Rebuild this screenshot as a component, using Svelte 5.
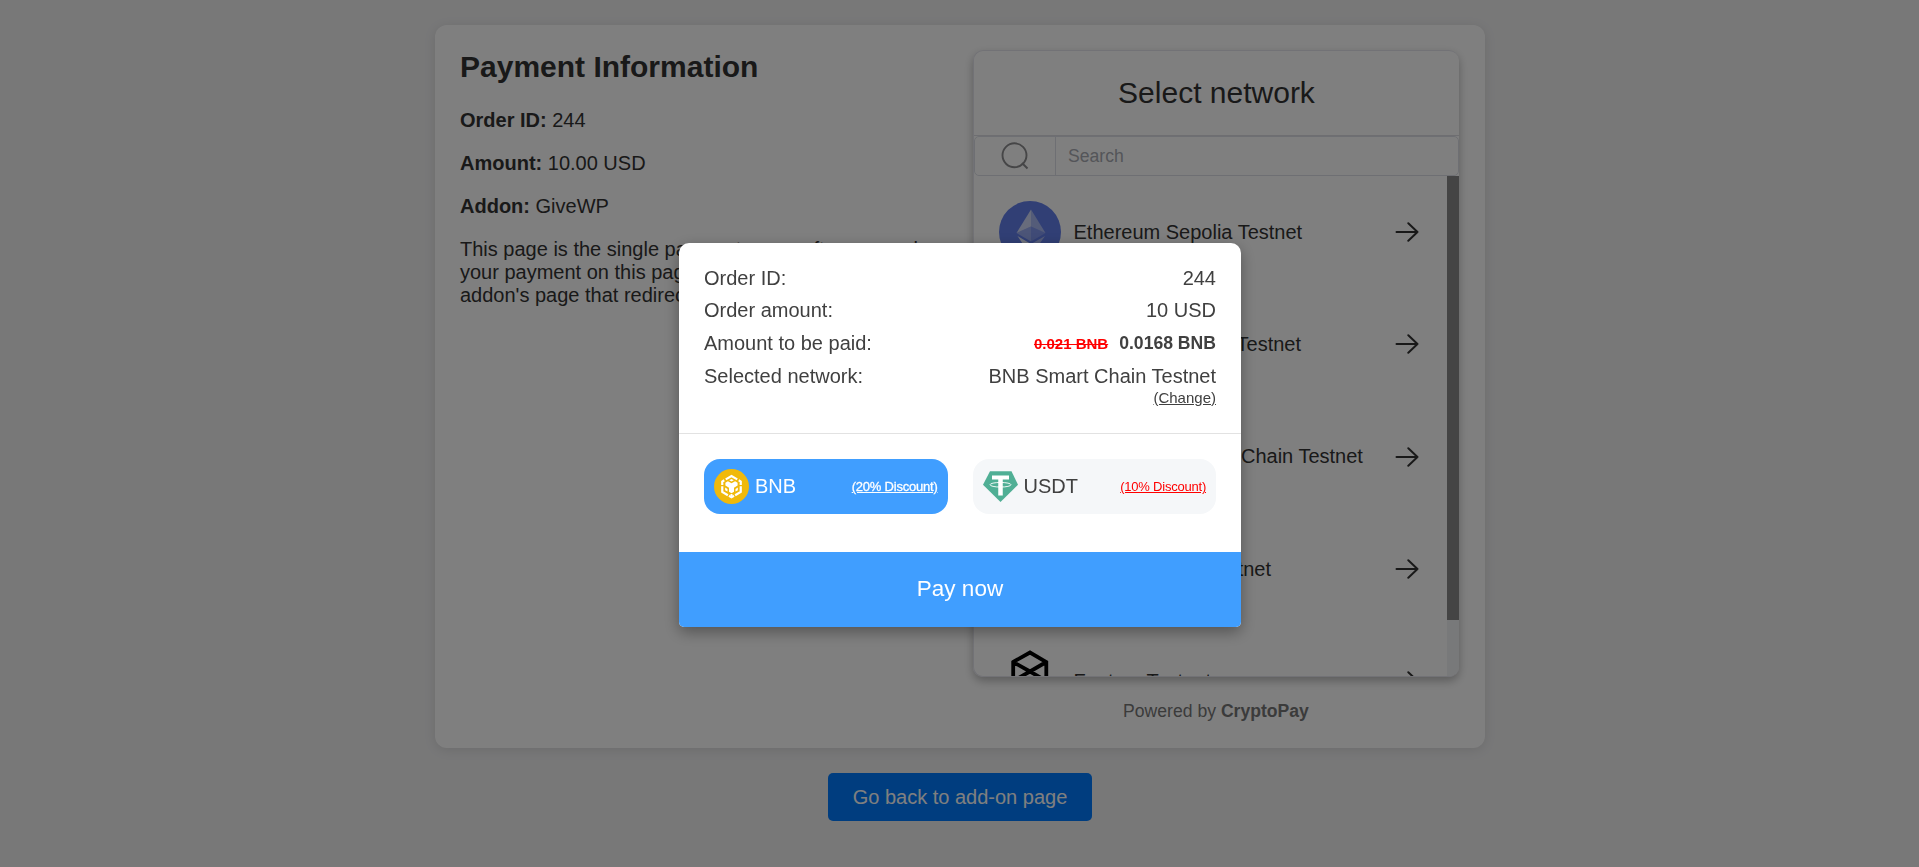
<script>
  const networks = [
    { name: 'Ethereum Sepolia Testnet', icon: 'eth' },
    { name: 'BNB Smart Chain Testnet', icon: 'bnb' },
    { name: 'Avalanche FUJI C-Chain Testnet', icon: 'avax' },
    { name: 'Polygon Amoy Testnet', icon: 'polygon' },
    { name: 'Fantom Testnet', icon: 'ftm' }
  ];
</script>

{#snippet bnbIcon()}
  <svg viewBox="0 0 70 70">
    <circle cx="35" cy="35" r="35" fill="#f0b90b" />
    <g fill="none" stroke="#fff" stroke-width="4.4">
      <path d="M23.500 20.800 35 14.200l11.500 6.600" />
      <path d="M20.500 22.500 16.500 25v7M49.500 22.500l4 2.500v7" />
      <path d="M16.500 34.500v11.300l11.200 6.700M53.500 34.500v11.300l-11.200 6.700" />
      <path d="M30 53.600l5 3 5-3" />
    </g>
    <path d="M35 19.800l4.500 2.600L35 25l-4.500-2.600z" fill="#fff" />
    <path d="M22.800 27.300l5-2.900L35 28.600l7.200-4.200 5 2.900v5.800l-7.200 4.200v8.300L35 48.500l-5-2.900v-8.300l-7.200-4.200z" fill="#fff" />
    <path d="M22.300 37l4.700 2.800v5.400l-4.700-2.800zM47.700 37 43 39.800v5.400l4.700-2.800z" fill="#fff" />
    <path d="M33 50h4v5h-4z" fill="#fff" />
  </svg>
{/snippet}

{#snippet arrow()}
  <svg class="arrow" viewBox="0 0 24 20" fill="none" stroke="#333" stroke-width="2" stroke-linecap="round" stroke-linejoin="round">
    <path d="M1.500 10h21M13.300 1.200l9.200 8.800-9.200 8.800" />
  </svg>
{/snippet}

<div class="page">
  <main class="card">
    <section class="info">
      <h1>Payment Information</h1>
      <p><b>Order ID:</b> 244</p>
      <p><b>Amount:</b> 10.00 USD</p>
      <p><b>Addon:</b> GiveWP</p>
      <p>This page is the single payment page, after you make your payment on this page, you'll be redirected to the addon's page that redirected you here.</p>
    </section>

    <section class="side">
      <div class="picker">
        <h2>Select network</h2>
        <div class="search">
          <span class="glass">
            <svg viewBox="0 0 28 28" fill="none" stroke="#8c8c8f" stroke-width="1.900">
              <circle cx="13.500" cy="13.300" r="12" />
              <path d="M21 21l5.500 5.500" />
            </svg>
          </span>
          <input placeholder="Search" />
        </div>
        <div class="body">
          <div class="list">
            {#each networks as n}
              <div class="network">
                <span class="logo">
                  {#if n.icon === 'eth'}
                    <svg viewBox="0 0 62 62">
                      <circle cx="31" cy="31" r="31" fill="#627eea" />
                      <path d="M32 8.500v17L17.500 32z" fill="#fff" fill-opacity=".7" />
                      <path d="M32 8.500v17L46.500 32z" fill="#fff" fill-opacity=".45" />
                      <path d="M17.500 32 32 25.500v15z" fill="#fff" fill-opacity=".35" />
                      <path d="M46.500 32 32 25.500v15z" fill="#fff" fill-opacity=".2" />
                      <path d="M18.500 35 32 43v12z" fill="#fff" fill-opacity=".8" />
                      <path d="M46 35 32 43v12z" fill="#fff" fill-opacity=".45" />
                    </svg>
                  {:else if n.icon === 'bnb'}
                    {@render bnbIcon()}
                  {:else if n.icon === 'avax'}
                    <svg viewBox="0 0 62 62"><circle cx="31" cy="31" r="31" fill="#e84142" /><path d="M31 13l7 12-12 22H13zM42 33l8 14H34z" fill="#fff" /></svg>
                  {:else if n.icon === 'polygon'}
                    <svg viewBox="0 0 62 62"><circle cx="31" cy="31" r="31" fill="#8247e5" /><path d="M15 25l8-5 8 5v12l8 5 8-5v-9l-8-5-8 5v9l-8 5-8-5z" fill="none" stroke="#fff" stroke-width="4" /></svg>
                  {:else}
                    <svg viewBox="0 0 62 62" fill="none" stroke="#000" stroke-width="3.800">
                      <path d="M14.200 12 31 2.500 47.300 12v38L31 59.500 14.200 50zM14.200 12 31 21.500 47.300 12M31 21.500 14.200 31 31 40.500 47.300 31z" />
                    </svg>
                  {/if}
                </span>
                <span class="name">{n.name}</span>
                {@render arrow()}
              </div>
            {/each}
          </div>
          <div class="track"><div class="thumb"></div></div>
        </div>
      </div>
      <div class="powered">Powered by <b>CryptoPay</b></div>
    </section>
  </main>
  <button class="back">Go back to add-on page</button>
</div>

<div class="overlay">
  <div class="modal">
    <div class="details">
      <div class="row"><span>Order ID:</span><span>244</span></div>
      <div class="row"><span>Order amount:</span><span>10 USD</span></div>
      <div class="row"><span>Amount to be paid:</span><span class="price"><s>0.021 BNB</s><b>0.0168 BNB</b></span></div>
      <div class="row">
        <span>Selected network:</span>
        <span class="selected">BNB Smart Chain Testnet<u>(Change)</u></span>
      </div>
    </div>
    <div class="coins">
      <div class="coin active">
        {@render bnbIcon()}
        <span>BNB</span>
        <u>(20% Discount)</u>
      </div>
      <div class="coin">
        <svg viewBox="0 0 70 70">
          <path d="M14 4.500h43L70 31.500 35 66 0 31.500z" fill="#50af95" />
          <path d="M18 13h34v8H39.500v32h-9V21H18z" fill="#fff" />
          <ellipse cx="35" cy="31.500" rx="21" ry="4.600" fill="none" stroke="#fff" stroke-width="1.800" />
        </svg>
        <span>USDT</span>
        <u>(10% Discount)</u>
      </div>
    </div>
    <button class="pay">Pay now</button>
  </div>
</div>

<style>
  :global(body) {
    background: #f0f0f1;
    font-family: "Liberation Sans", Arial, sans-serif;
    overflow: hidden;
  }
  .page {
    box-sizing: border-box;
    height: 867px;
    padding: 25px 0 0 1px;
    display: flex;
    flex-direction: column;
    align-items: center;
    gap: 25px;
    color: #333;
    font-size: 20px;
    line-height: 23px;
  }
  .card {
    box-sizing: border-box;
    width: 1050px;
    height: 723px;
    padding: 25px 26px 25px 25px;
    display: flex;
    justify-content: space-between;
    background: #fff;
    border-radius: 12px;
    box-shadow: 0 2px 12px rgba(0, 0, 0, 0.1);
  }
  .info { width: 489px; }
  h1 { margin: 0 0 25px; font-size: 30px; line-height: 34px; }
  p { margin: 0 0 20px; }
  .side { width: 486px; }
  .picker {
    box-sizing: border-box;
    height: 627px;
    display: flex;
    flex-direction: column;
    border: 1px solid #e4e4ec;
    border-right: 0;
    border-radius: 10px;
    overflow: hidden;
    box-shadow: 0 4px 10px rgba(0, 0, 0, 0.28);
  }
  h2 {
    margin: 0;
    height: 82px;
    padding-bottom: 2px;
    display: flex;
    align-items: center;
    justify-content: center;
    font-weight: 400;
    font-size: 30px;
    border-bottom: 1px solid #dcdce2;
  }
  .search {
    box-sizing: border-box;
    height: 40px;
    display: flex;
    border: 1px solid #dcdfe6;
    border-radius: 5px;
  }
  .glass {
    box-sizing: border-box;
    width: 81px;
    display: flex;
    align-items: center;
    justify-content: center;
    border-right: 1px solid #dcdfe6;
  }
  .glass svg { width: 28px; height: 28px; }
  input {
    flex: 1;
    min-width: 0;
    padding: 0 12px;
    border: 0;
    background: none;
    font: 17.600px "Liberation Sans", Arial, sans-serif;
  }
  input::placeholder { color: #a8abb2; }
  .body { flex: 1; min-height: 0; display: flex; }
  .list { flex: 1; overflow: hidden; }
  .network {
    box-sizing: border-box;
    height: 112.330px;
    padding: 0 28.500px 0 25px;
    display: flex;
    align-items: center;
  }
  .logo, .logo svg { width: 62px; height: 62px; display: block; }
  .name { flex: 1; margin-left: 12.500px; }
  .arrow { width: 24px; height: 20px; }
  .track { width: 12px; background: #f0f2f5; }
  .thumb { height: 444px; background: #888; }
  .powered {
    margin-top: 23px;
    text-align: center;
    font-size: 17.600px;
    color: #777;
  }
  .back {
    width: 264px;
    height: 48px;
    padding: 0;
    border: 0;
    border-radius: 5px;
    background: #007bff;
    color: #fff;
    font: 20px "Liberation Sans", Arial, sans-serif;
  }
  .overlay {
    position: fixed;
    inset: 0;
    display: flex;
    justify-content: center;
    align-items: flex-start;
    padding-top: 243px;
    background: rgba(0, 0, 0, 0.5);
  }
  .modal {
    width: 562px;
    height: 384px;
    margin-left: 1px;
    display: flex;
    flex-direction: column;
    background: #fff;
    color: #404040;
    border-radius: 10px 10px 5px 5px;
    overflow: hidden;
    box-shadow: 0 5px 15px rgba(0, 0, 0, 0.35);
    font-size: 20px;
    line-height: 23px;
  }
  .details {
    box-sizing: border-box;
    height: 191px;
    padding: 23.600px 25px 0;
    border-bottom: 1px solid #e2e2e2;
  }
  .row {
    display: flex;
    justify-content: space-between;
    margin-bottom: 9.700px;
  }
  .price { display: flex; align-items: baseline; gap: 11px; }
  .price b { font-size: 17.600px; }
  .price s { font-size: 15px; font-weight: 700; color: #f00; }
  .selected { display: flex; flex-direction: column; align-items: flex-end; }
  .selected u { font-size: 15px; line-height: 20px; }
  .coins { flex: 1; display: flex; gap: 25px; padding: 25px 25px 0; }
  .coin {
    box-sizing: border-box;
    flex: 1;
    height: 55px;
    padding: 0 10px;
    display: flex;
    align-items: center;
    border-radius: 16px;
    background: #f5f7f9;
  }
  .coin svg { width: 35px; height: 35px; }
  .coin span { flex: 1; margin-left: 6px; }
  .coin u { font-size: 13px; letter-spacing: -0.220px; color: #f00; }
  .active { background: #409eff; color: #fff; }
  .active u { color: #fff; -webkit-text-stroke: 0.300px #fff; }
  .pay {
    height: 75px;
    padding: 0 0 2px;
    border: 0;
    background: #409eff;
    color: #fff;
    font: 22.500px "Liberation Sans", Arial, sans-serif;
  }
</style>
